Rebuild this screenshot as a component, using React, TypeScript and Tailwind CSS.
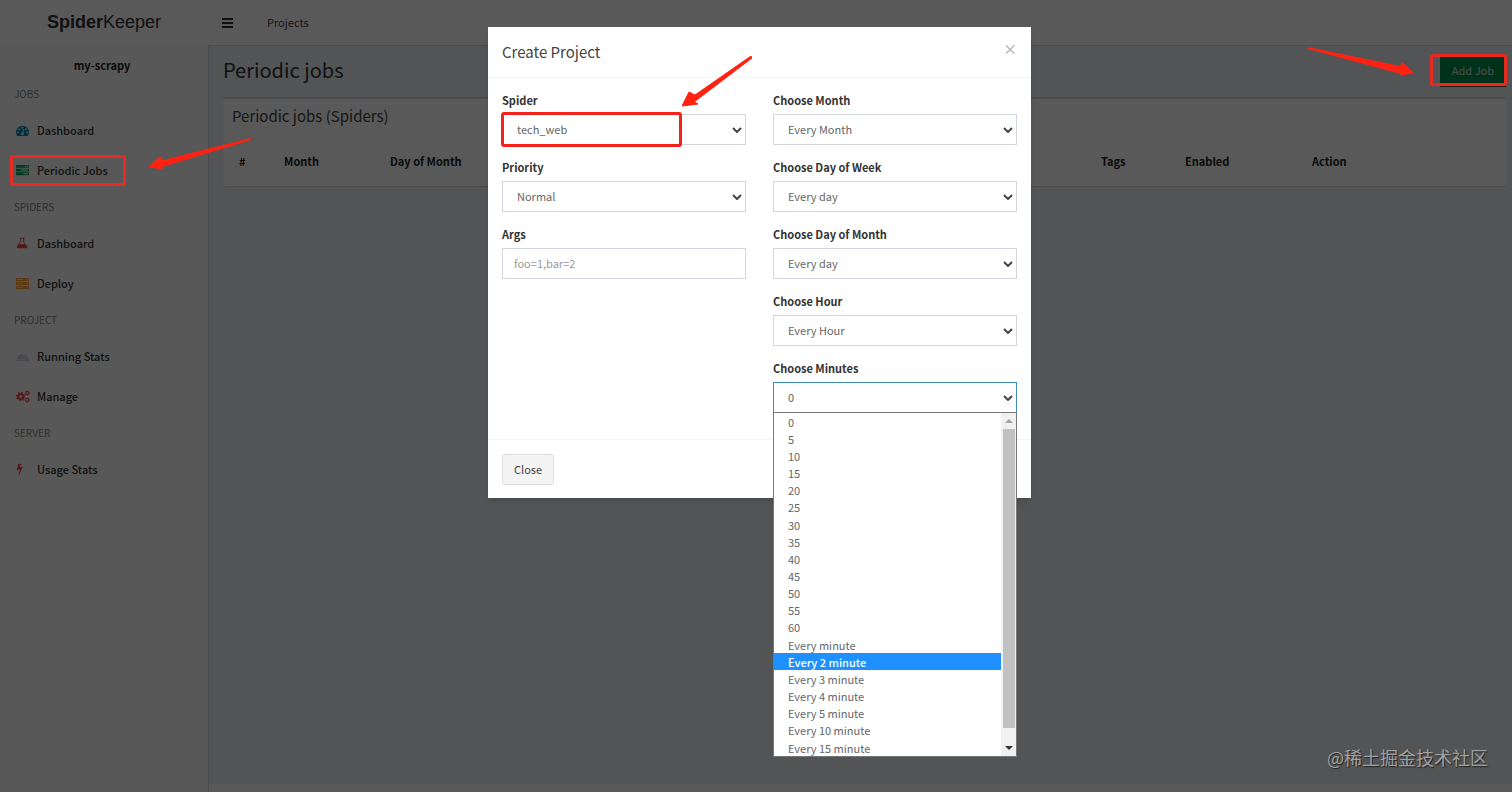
import React, { useState } from "react";

type IconProps = { className?: string };

type NavItem = {
    name: string,
    icon: React.ReactNode,
}

type NavGroup = {
    title: string,
    items: NavItem[],
}

function DashboardIcon({ className }: IconProps) {
    return (
        <svg viewBox="0 0 1792 1792" fill="currentColor" className={className}>
            <path d="M384 1152q0-53-37.5-90.5t-90.5-37.5-90.5 37.5-37.5 90.5 37.5 90.5 90.5 37.5 90.5-37.5 37.5-90.5zm192-448q0-53-37.5-90.5t-90.5-37.5-90.5 37.5-37.5 90.5 37.5 90.5 90.5 37.5 90.5-37.5 37.5-90.5zm428 481l101-382q6-26-7.5-48.5t-38.5-29.5-48 6.5-30 39.5l-101 382q-60 5-107 43.5t-63 98.5q-20 77 20 146t117 89 146-20 89-117q16-60-6-117t-72-91zm660-33q0-53-37.5-90.5t-90.5-37.5-90.5 37.5-37.5 90.5 37.5 90.5 90.5 37.5 90.5-37.5 37.5-90.5zm-640-640q0-53-37.5-90.5t-90.5-37.5-90.5 37.5-37.5 90.5 37.5 90.5 90.5 37.5 90.5-37.5 37.5-90.5zm448 192q0-53-37.5-90.5t-90.5-37.5-90.5 37.5-37.5 90.5 37.5 90.5 90.5 37.5 90.5-37.5 37.5-90.5zm320 448q0 261-141 483-19 29-54 29h-1402q-35 0-54-29-141-221-141-483 0-182 71-348t191-286 286-191 348-71 348 71 286 191 191 286 71 348z" />
        </svg>
    )
}

function TasksIcon({ className }: IconProps) {
    return (
        <svg viewBox="0 0 1792 1792" fill="currentColor" className={className}>
            <path d="M1024 1408h640v-128h-640v128zm-384-512h1024v-128h-1024v128zm640-512h384v-128h-384v128zm512 832v256q0 26-19 45t-45 19h-1664q-26 0-45-19t-19-45v-256q0-26 19-45t45-19h1664q26 0 45 19t19 45zm0-512v256q0 26-19 45t-45 19h-1664q-26 0-45-19t-19-45v-256q0-26 19-45t45-19h1664q26 0 45 19t19 45zm0-512v256q0 26-19 45t-45 19h-1664q-26 0-45-19t-19-45v-256q0-26 19-45t45-19h1664q26 0 45 19t19 45z" />
        </svg>
    )
}

function ServerIcon({ className }: IconProps) {
    return (
        <svg viewBox="0 0 14 14" fill="currentColor" fillRule="evenodd" className={className}>
            <path d="M0 1h14v3.4H0zM1 2.3v.8h7v-.8zM11.5 2v1.4h1.2V2zM0 5.3h14v3.4H0zM1 6.6v.8h7v-.8zM11.5 6.3v1.4h1.2V6.3zM0 9.6h14V13H0zM1 10.9v.8h7v-.8zM11.5 10.6V12h1.2v-1.4z" />
        </svg>
    )
}

function FlaskIcon({ className }: IconProps) {
    return (
        <svg viewBox="0 0 14 14" fill="currentColor" fillRule="evenodd" className={className}>
            <path d="M4 1h6v1H9.4v3.4l3.4 5.4c.8 1.2.2 2.2-1.1 2.2H2.3c-1.3 0-1.9-1-1.1-2.2l3.4-5.4V2H4zM5.6 2v3.7L3.9 8.5h6.2L8.4 5.7V2z" />
        </svg>
    )
}

function AreaIcon({ className }: IconProps) {
    return (
        <svg viewBox="0 0 14 12" fill="currentColor" className={className}>
            <path d="M0 10h14v1H0zM1 9.500V8l4-5 3 2 2-1 3 5.500z" />
        </svg>
    )
}

function GearsIcon({ className }: IconProps) {
    return (
        <svg viewBox="0 0 14 13" fill="none" stroke="currentColor" className={className}>
            <circle cx="4.7" cy="6.5" r="2.6" strokeWidth="2" />
            <circle cx="4.7" cy="6.5" r="4.1" strokeWidth="1.2" strokeDasharray="1.6 1.62" />
            <circle cx="11.3" cy="3" r="1.5" strokeWidth="1.2" />
            <circle cx="11.3" cy="3" r="2.3" strokeWidth=".7" strokeDasharray="1.2 1.2" />
            <circle cx="11.3" cy="10" r="1.5" strokeWidth="1.2" />
            <circle cx="11.3" cy="10" r="2.3" strokeWidth=".7" strokeDasharray="1.2 1.2" />
        </svg>
    )
}

function BoltIcon({ className }: IconProps) {
    return (
        <svg viewBox="320 0 1100 1792" fill="currentColor" className={className}>
            <path d="M1333 566q18 20 7 44l-540 1157q-13 25-42 25-4 0-14-2-17-5-25.5-19t-4.5-30l197-808-406 101q-4 1-12 1-18 0-31-11-18-15-13-39l201-825q4-16 17-26t31-10h328q19 0 32 12.5t13 29.5q0 8-5 18l-171 463 396-98q8-2 12-2 19 0 34 15z" />
        </svg>
    )
}

const navGroups: NavGroup[] = [
    {
        title: "JOBS",
        items: [
            { name: "Dashboard", icon: <DashboardIcon className="size-[13px] text-[#0088b7]" /> },
            { name: "Periodic Jobs", icon: <TasksIcon className="size-[13px] text-[#00a65a]" /> },
        ],
    },
    {
        title: "SPIDERS",
        items: [
            { name: "Dashboard", icon: <FlaskIcon className="size-3 text-[#f0434a]" /> },
            { name: "Deploy", icon: <ServerIcon className="size-[13px] text-[#ff9a2e]" /> },
        ],
    },
    {
        title: "PROJECT",
        items: [
            { name: "Running Stats", icon: <AreaIcon className="h-3 w-[14px] text-[#d2d6de]" /> },
            { name: "Manage", icon: <GearsIcon className="h-[13px] w-[14px] text-[#f0434a]" /> },
        ],
    },
    {
        title: "SERVER",
        items: [
            { name: "Usage Stats", icon: <BoltIcon className="h-3 text-[#f0434a]" /> },
        ],
    },
];

const minutes = [
    "0", "5", "10", "15", "20", "25", "30", "35", "40", "45", "50", "55", "60",
    "Every minute", "Every 2 minute", "Every 3 minute", "Every 4 minute",
    "Every 5 minute", "Every 10 minute", "Every 15 minute",
];

function Sidebar() {
    return (
        <aside className="w-[208px] shrink-0 bg-[#fcfcfc]">
            <p className="pt-3 pr-1 pb-1 text-center leading-4 font-bold">my-scrapy</p>
            <nav>
                {navGroups.map((group) => (
                    <div key={group.title}>
                        <h4 className="h-[33px] pl-[14px] text-[10px] leading-[33px] text-[#848484]">{group.title}</h4>
                        <ul>
                            {group.items.map((item) => (
                                <li key={item.name}>
                                    <a href="#" className="flex h-10 items-center pl-4 font-medium text-[#333]">
                                        <span className="flex w-[21px]">{item.icon}</span>
                                        {item.name}
                                    </a>
                                </li>
                            ))}
                        </ul>
                    </div>
                ))}
            </nav>
        </aside>
    )
}

function JobsTable() {
    return (
        <table className="w-full table-fixed text-left">
            <colgroup>
                <col className="w-[45px]" />
                <col className="w-[106px]" />
                <col className="w-[110px]" />
                <col />
                <col className="w-[84px]" />
                <col className="w-[127px]" />
                <col className="w-[185px]" />
            </colgroup>
            <thead>
                <tr className="h-9">
                    <th className="pl-[7px]">#</th>
                    <th className="pl-[7px]">Month</th>
                    <th className="pl-[7px]">Day of Month</th>
                    <td></td>
                    <th>Tags</th>
                    <th>Enabled</th>
                    <th>Action</th>
                </tr>
            </thead>
        </table>
    )
}

function Field({ id, label, children }: { id: string, label: string, children: React.ReactNode }) {
    return (
        <div className="mb-[14px]">
            <label htmlFor={id} className="mb-[5px] block leading-[17px] font-bold text-[#333]">{label}</label>
            {children}
        </div>
    )
}

function SelectBox({ id, value, open }: { id: string, value: string, open?: boolean }) {
    return (
        <div className="relative">
            <select id={id} className={`block h-[31px] w-full appearance-none border bg-white px-[14px] pb-px text-[#666] outline-none ${open ? "border-[#3c8dbc]" : "border-[#d2d6de]"}`}>
                <option>{value}</option>
            </select>
            <svg viewBox="0 0 10 6" className="pointer-events-none absolute top-[13px] right-1 h-[6px] w-[10px]">
                <path d="M1 1l4 4 4-4" fill="none" stroke="#444" strokeWidth="2" />
            </svg>
            {open && <MinutesList />}
        </div>
    )
}

function MinutesList() {
    const [active, setActive] = useState("Every 2 minute");

    return (
        <div className="absolute top-full right-0 left-0 z-10 -mt-px flex h-[345px] border border-[#767676] bg-white">
            <ul role="listbox" aria-label="Minutes" className="flex flex-1 flex-col">
                {minutes.map((m) => (
                    <li
                        key={m}
                        role="option"
                        aria-selected={m === active}
                        onMouseEnter={() => setActive(m)}
                        className={`flex flex-1 items-center pl-[14px] leading-4 ${m === active ? "bg-[#1e90ff] font-medium text-white" : "text-[#666]"}`}
                    >
                        {m}
                    </li>
                ))}
            </ul>
            <div className="flex w-[15px] flex-col items-center bg-[#f1f1f1]">
                <svg viewBox="0 0 8 4" className="my-[6px] h-1 w-2"><path d="M0 4l4-4 4 4z" fill="#a3a3a3" /></svg>
                <div className="w-3 flex-1 bg-[#c1c1c1]"></div>
                <svg viewBox="0 0 8 4" className="mt-[18px] mb-[6px] h-1 w-2"><path d="M0 0l4 4 4-4z" fill="#333" /></svg>
            </div>
        </div>
    )
}

function CreateModal() {
    return (
        <div role="dialog" aria-label="Create Project" className="relative w-full max-w-[543px] bg-white shadow-md">
            <div className="flex h-[51px] items-start justify-between border-b border-[#f4f4f4] px-[14px] pt-[13px]">
                <h4 className="text-[15px] leading-6 text-[#444]">Create Project</h4>
                <button aria-label="Close dialog" className="text-[14px] leading-4 font-bold text-[#bbb]">×</button>
            </div>
            <div className="grid grid-cols-2 gap-x-[27px] px-[14px] pt-[14px] pb-3">
                <div>
                    <Field id="spider" label="Spider"><SelectBox id="spider" value="tech_web" /></Field>
                    <Field id="priority" label="Priority"><SelectBox id="priority" value="Normal" /></Field>
                    <Field id="args" label="Args">
                        <input id="args" placeholder="foo=1,bar=2" className="block h-[31px] w-full border border-[#d2d6de] px-[11px] pb-px placeholder:text-[#999]" />
                    </Field>
                </div>
                <div>
                    <Field id="month" label="Choose Month"><SelectBox id="month" value="Every Month" /></Field>
                    <Field id="week" label="Choose Day of Week"><SelectBox id="week" value="Every day" /></Field>
                    <Field id="day" label="Choose Day of Month"><SelectBox id="day" value="Every day" /></Field>
                    <Field id="hour" label="Choose Hour"><SelectBox id="hour" value="Every Hour" /></Field>
                    <Field id="minutes" label="Choose Minutes"><SelectBox id="minutes" value="0" open /></Field>
                </div>
            </div>
            <div className="border-t border-[#f4f4f4] px-[14px] pt-[14px] pb-[13px]">
                <button className="block h-[31px] rounded-[3px] border border-[#ddd] bg-[#f4f4f4] px-[11px] text-[#444]">Close</button>
            </div>

            <div className="pointer-events-none absolute top-[85px] left-[13px] h-[35px] w-[181px] rounded-[3px] border-3 border-[#f5221b]"></div>
            <svg viewBox="0 0 70 51" className="pointer-events-none absolute top-[29px] left-[194px] h-[51px] w-[70px]">
                <path d="M69 0L13 39 7 36 0 50 16 48 11 45 12 46 70 2z" fill="#ff2212" stroke="#ff2212" strokeLinejoin="round" />
            </svg>
        </div>
    )
}

export default function App() {
    return (
        <div className="relative flex min-h-screen flex-col bg-[#ecf0f5] font-['Noto_Sans_CJK_SC',sans-serif] text-[11px] text-[#222]">
            <header className="flex h-[45px] items-center bg-white">
                <a href="#" className="w-[208px] text-center font-['Liberation_Sans',sans-serif] text-[18px] text-[#333]"><b>Spider</b>Keeper</a>
                <button aria-label="Toggle navigation" className="ml-[14px]">
                    <svg viewBox="0 0 11 10" className="h-[10px] w-[11px]" fill="#333"><path d="M0 0h11v2H0zM0 4h11v2H0zM0 8h11v2H0z" /></svg>
                </button>
                <a href="#" className="ml-[34px] text-[#444]">Projects</a>
            </header>

            <div className="flex flex-1">
                <Sidebar />
                <main className="flex flex-1 flex-col border-t border-l border-[#d2d6de]">
                    <div className="flex-1 pr-[6px] pl-[14px]">
                        <div className="flex h-[51px] items-center justify-between">
                            <h1 className="pb-1 text-[20px] text-[#333]">Periodic jobs</h1>
                            <button className="h-[30px] border-b-2 border-[#5f4a2c] bg-[#008d4c] px-3 text-[#e0e0e0]">Add Job</button>
                        </div>
                        <section className="rounded-[3px] border-t-2 border-b border-[#d2d6de] border-b-[#cdd0d4] bg-white px-[9px] pt-[2px] pb-[7px]">
                            <h3 className="mb-3 text-[15px] leading-[30px] text-[#444]">Periodic jobs (Spiders)</h3>
                            <JobsTable />
                        </section>
                    </div>
                    <footer className="h-2 bg-white"></footer>
                </main>
            </div>

            <div className="absolute inset-0 flex items-start justify-center bg-black/65 pt-[27px] pl-[7px]">
                <CreateModal />
            </div>

            <div className="pointer-events-none absolute top-[155px] left-[10px] h-[31px] w-[116px] rounded-[3px] border-3 border-[#e92a20]"></div>
            <svg viewBox="0 0 104 34" className="pointer-events-none absolute top-[138px] left-[148px] h-[34px] w-[104px]">
                <path d="M103 0L15 22 12 18 0 29 15 32 14 29 103 2z" fill="#ff2212" />
            </svg>
            <div className="pointer-events-none absolute top-[54px] right-[5px] h-[32px] w-[77px] rounded-[3px] border-3 border-[#e92a20]"></div>
            <svg viewBox="0 0 106 30" className="pointer-events-none absolute top-[47px] right-[98px] h-[30px] w-[106px]">
                <path d="M0 0L92 19 94 15 106 26 92 29 93 27 0 2z" fill="#ff2212" />
            </svg>
            <p className="absolute right-[24px] bottom-[21px] text-[18px] leading-7 text-[#a0a1a2] [text-shadow:1px_1px_1px_#222]">@稀土掘金技术社区</p>
        </div>
    )
}
